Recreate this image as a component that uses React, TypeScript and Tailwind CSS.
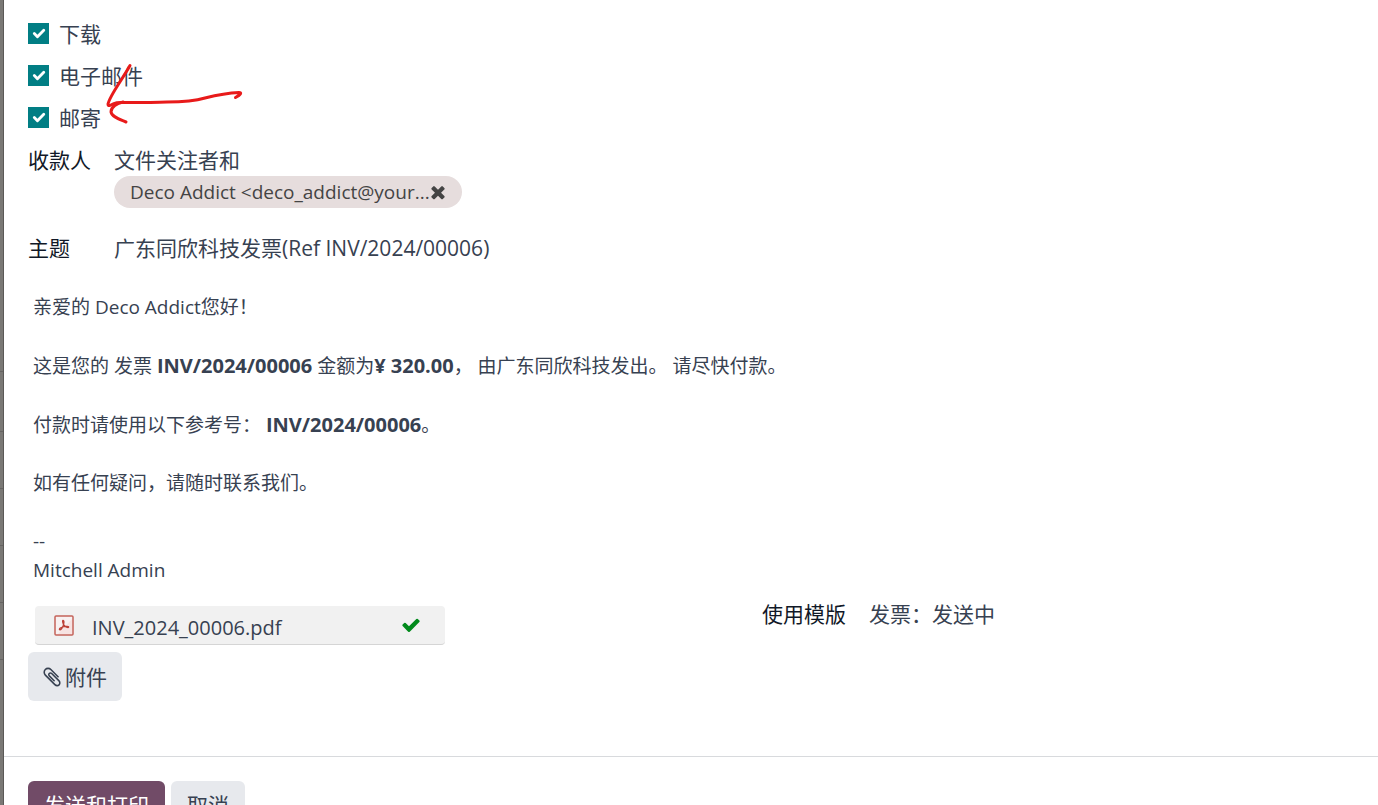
import { useState } from 'react';
import type { ReactNode } from 'react';

const CHECK_PATH =
  'M1671 566q0 40-28 68l-724 724-136 136q-28 28-68 28t-68-28l-136-136-362-362q-28-28-28-68t28-68l136-136q28-28 68-28t68 28l294 295 656-657q28-28 68-28t68 28l136 136q28 28 28 68z';
const TIMES_PATH =
  'M1490 1322q0 40-28 68l-136 136q-28 28-68 28t-68-28l-294-294-294 294q-28 28-68 28t-68-28l-136-136q-28-28-28-68t28-68l294-294-294-294q-28-28-28-68t28-68l136-136q28-28 68-28t68 28l294 294 294-294q28-28 68-28t68 28l136 136q28 28 28 68t-28 68l-294 294 294 294q28 28 28 68z';
const CLIP_PATH =
  'M1596 1385q0 117-79 196t-196 79q-135 0-235-100l-777-776q-113-115-113-271 0-159 110-270t269-111q158 0 273 113l605 606q10 10 10 22 0 16-30.5 46.5t-46.5 30.5q-13 0-23-10l-606-607q-79-77-181-77-106 0-179 75t-73 181q0 105 76 181l776 777q63 63 145 63 64 0 106-42t42-106q0-82-63-145l-581-581q-26-24-60-24-29 0-48 19t-19 48q0 32 25 59l410 410q10 10 10 22 0 16-31 47t-47 31q-12 0-22-10l-410-410q-63-61-63-149 0-82 57-139t139-57q88 0 149 63l581 581q100 98 100 235z';

type IconProps = {
  path: string;
  className: string;
};

const Icon = ({ path, className }: IconProps) => (
  <svg viewBox="0 0 1792 1792" fill="currentColor" className={className} aria-hidden="true">
    <path d={path} />
  </svg>
);

const PdfIcon = () => (
  <svg viewBox="0 0 20 21" className="h-[21px] w-5" fill="none" aria-hidden="true">
    <rect x="1" y="1" width="18" height="19" rx="1" fill="#f8f1f1" stroke="#c4635a" strokeWidth="1.5" />
    <path d="M18 4v15H4z" fill="#f7e3e2" />
    <path
      d="M9 5.500c1.500 0 .9 2.800.2 5-.8 2.200-2.400 4.600-3.600 4.200-1-.8 1.500-2.500 4.300-3.100 2.200-.5 5-.4 4.700.6-.5 1-3.300-.2-4.800-2.200-1-1.600-1.600-4.400-.8-4.500z"
      stroke="#bd4137"
      strokeWidth="1.300"
    />
  </svg>
);

type CheckRowProps = {
  id: string;
  label: string;
};

const CheckRow = ({ id, label }: CheckRowProps) => {
  const [checked, setChecked] = useState(true);

  return (
    <div className="flex h-[42px] items-center gap-2.5">
      <span className="relative h-[21px] w-[21px]">
        <input
          id={id}
          type="checkbox"
          checked={checked}
          onChange={() => setChecked(!checked)}
          className="block h-full w-full appearance-none border border-gray-400 checked:border-[#017e84] checked:bg-[#017e84]"
        />
        {checked && (
          <svg viewBox="0 0 20 20" className="pointer-events-none absolute inset-0 h-full w-full" aria-hidden="true">
            <path d="m6 10 3 3 6-6" fill="none" stroke="#fff" strokeWidth="2.700" strokeLinecap="round" strokeLinejoin="round" />
          </svg>
        )}
      </span>
      <label htmlFor={id} className="pt-0.5">
        {label}
      </label>
    </div>
  );
};

type FieldProps = {
  id: string;
  label: string;
  children: ReactNode;
};

const Field = ({ id, label, children }: FieldProps) => (
  <div className="flex items-start">
    <label htmlFor={id} className="w-[86px] shrink-0 text-[#111827]">
      {label}
    </label>
    <div className="min-w-0 flex-1">{children}</div>
  </div>
);

const Arrow = () => (
  <svg
    viewBox="0 0 150 70"
    className="pointer-events-none absolute left-24 top-[60px] h-[70px] w-[150px]"
    fill="none"
    stroke="#e81a1a"
    strokeWidth="3"
    strokeLinecap="round"
    strokeLinejoin="round"
    aria-hidden="true"
  >
    <path d="M30 5.500C22 20 10 35 8 44c0 3 3 1 6-.5 3-1.500 7-1 11-1 16 0 30 0 42-.5 16 0 28-1 38-4 12-3 22-5 34-5.500 3 0 2 2-3.500 5" />
    <path d="M23 42c-6 1-12 5-12 10 1 5 8 7 15 10" />
  </svg>
);

const Backdrop = () => (
  <div className="w-1 shrink-0 border-r border-[#5b5957] bg-[#7a7875]">
    <div className="h-[372px] border-b border-[#666462]" />
    <div className="h-[60px] border-b border-[#666462]" />
    {[1, 2, 3, 4].map(row => (
      <div key={row} className="h-[57px] border-b border-[#666462]" />
    ))}
  </div>
);

const App = () => {
  const [recipient, setRecipient] = useState(true);
  const [subject, setSubject] = useState('广东同欣科技发票(Ref INV/2024/00006)');

  return (
    <div className="flex h-screen overflow-hidden bg-white font-['Open_Sans','Noto_Sans_CJK_SC',sans-serif] text-[21px] leading-8 text-[#374151]">
      <Backdrop />
      <main className="relative min-w-0 flex-1">
        <div className="px-6 pt-3">
          <CheckRow id="download" label="下载" />
          <CheckRow id="email" label="电子邮件" />
          <CheckRow id="post" label="邮寄" />

          <div className="mt-1.5">
            <Field id="recipients" label="收款人">
              <div>文件关注者和</div>
              {recipient && (
                <span className="flex h-8 w-fit items-center rounded-full bg-[#e6dddd] pl-4 pr-3.5 text-[19px] text-[#444]">
                  Deco Addict &lt;deco_addict@your...
                  <button id="recipients" type="button" className="-ml-0.5" onClick={() => setRecipient(false)}>
                    <Icon path={TIMES_PATH} className="h-5 w-5" />
                  </button>
                </span>
              )}
            </Field>
          </div>
          <div className="mt-6">
            <Field id="subject" label="主题">
              <input
                id="subject"
                value={subject}
                onChange={e => setSubject(e.target.value)}
                className="block h-8 w-full outline-none"
              />
            </Field>
          </div>

          <div className="mt-[29px] space-y-[29px] px-[5px] text-[19px] leading-[29px]">
            <p>亲爱的 Deco Addict您好！</p>
            <p>
              这是您的 发票 <strong className="text-[20px]">INV/2024/00006</strong> 金额为
              <strong className="text-[20px]">¥ 320.00</strong>， 由广东同欣科技发出。 请尽快付款。
            </p>
            <p>
              付款时请使用以下参考号： <strong className="text-[20px]">INV/2024/00006</strong>。
            </p>
            <p>如有任何疑问，请随时联系我们。</p>
            <p>
              --
              <br />
              Mitchell Admin
            </p>
          </div>

          <div className="mt-[13px] grid grid-cols-[31fr_25fr]">
            <div className="pt-2">
              <div className="ml-[7px] flex h-[39px] w-[410px] items-center rounded-sm border-b border-[#d5d5d5] bg-[#f1f1f1] pl-[19px] pr-6">
                <PdfIcon />
                <a href="#pdf" className="ml-[18px] flex-1 pt-1.5 text-[20px]">
                  INV_2024_00006.pdf
                </a>
                <Icon path={CHECK_PATH} className="h-5 w-5 text-[#028a1c]" />
              </div>
              <button type="button" className="mt-[7px] flex h-[49px] items-center gap-0.5 rounded-md bg-[#e7e9ed] px-[15px]">
                <Icon path={CLIP_PATH} className="-ml-0.5 h-[22px] w-[22px]" />
                附件
              </button>
            </div>
            <div className="flex items-start">
              <label htmlFor="template" className="w-[107px] text-[#111827]">
                使用模版
              </label>
              <select id="template" className="h-8 flex-1 appearance-none outline-none">
                <option>发票：发送中</option>
              </select>
            </div>
          </div>
        </div>

        <footer className="mt-[55px] flex gap-1.5 border-t border-[#d8dadd] px-6 pt-6">
          <button type="button" className="h-12 rounded-md bg-[#714b67] px-4 text-white">
            发送和打印
          </button>
          <button type="button" className="h-12 rounded-md bg-[#e7e9ed] px-4">
            取消
          </button>
        </footer>
        <Arrow />
      </main>
    </div>
  );
};

export default App;
